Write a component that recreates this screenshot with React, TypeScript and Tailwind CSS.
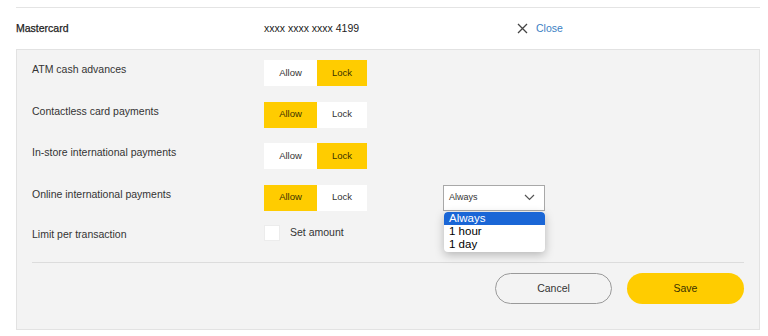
import { useState } from "react";

type Choice = "allow" | "lock";

const rows: { label: string; value: Choice }[] = [
    { label: "ATM cash advances", value: "lock" },
    { label: "Contactless card payments", value: "allow" },
    { label: "In-store international payments", value: "lock" },
    { label: "Online international payments", value: "allow" },
];

function Toggle({ value }: { value: Choice }) {
    return (
        <div className="flex h-[26px]">
            <div
                className={`w-[53px] flex items-center justify-center text-[9.5px] ${
                    value === "allow" ? "bg-[#ffcc00] text-[#3a3200]" : "bg-white text-[#333]"
                }`}
            >
                Allow
            </div>
            <div
                className={`w-[50px] flex items-center justify-center text-[9.5px] ${
                    value === "lock" ? "bg-[#ffcc00] text-[#3a3200]" : "bg-white text-[#333]"
                }`}
            >
                Lock
            </div>
        </div>
    );
}

export default function App() {
    const [period] = useState("Always");

    return (
        <div
            className="w-[768px] h-[336px] bg-white px-4 text-[#333] overflow-hidden"
            style={{ fontFamily: '"Liberation Sans", Arial, sans-serif' }}
        >
            <div className="pt-[7px] w-[744px]">
                <div className="h-px bg-[#e4e4e4]" />
            </div>

            <div className="flex items-center h-[41px] w-[744px] text-[10.5px]">
                <div className="w-[248px] text-[#222] [-webkit-text-stroke:0.25px_#222]">Mastercard</div>
                <div className="w-[253px] text-[#222]">xxxx xxxx xxxx 4199</div>
                <div className="flex items-center gap-[8px]">
                    <svg width="11" height="11" viewBox="0 0 11 11" className="text-[#444]">
                        <path d="M1 1L10 10M10 1L1 10" stroke="currentColor" strokeWidth="1.3" />
                    </svg>
                    <span className="text-[#3b7fc4] text-[10.5px]">Close</span>
                </div>
            </div>

            <div className="w-[744px] h-[281px] border border-[#e2e2e2] bg-[#f3f3f3] px-[15px] pt-[10px]">
                {rows.map((row, i) => (
                    <div key={row.label} className="flex items-start h-[41.5px]">
                        <div className="w-[232px] pt-[2px] text-[10.5px]">{row.label}</div>
                        <Toggle value={row.value} />
                        {i === 3 && (
                            <div className="relative ml-[76px]">
                                <div className="w-[102px] h-[26px] bg-white border border-[#a8a8a8] flex items-center justify-between pl-[5px] pr-[9px]">
                                    <span className="text-[9px] text-[#333]">{period}</span>
                                    <svg width="11" height="7" viewBox="0 0 11 7">
                                        <path d="M1 1L5.5 5.5L10 1" fill="none" stroke="#555" strokeWidth="1.2" />
                                    </svg>
                                </div>
                                <div className="absolute left-[1px] top-[27px] w-[101px] bg-white rounded-[4px] shadow-[0_3px_10px_rgba(0,0,0,0.25)] overflow-hidden text-[11.5px] leading-[13px] text-black z-10">
                                    <div className="bg-[#1a66d6] text-white pl-[5px] rounded-t-[3px]">Always</div>
                                    <div className="pl-[5px]">1 hour</div>
                                    <div className="pl-[5px] pb-[1px]">1 day</div>
                                </div>
                            </div>
                        )}
                    </div>
                ))}

                <div className="flex items-start h-[36px] -mt-[1px]">
                    <div className="w-[232px] pt-[2px] text-[10.5px]">Limit per transaction</div>
                    <div className="flex items-center gap-[10px]">
                        <div className="w-[16px] h-[16px] bg-white border border-[#ececec]" />
                        <span className="text-[10.5px]">Set amount</span>
                    </div>
                </div>

                <div className="h-px bg-[#dcdcdc] mt-[1px]" />

                <div className="flex justify-end gap-[15px] pt-[10px]">
                    <button className="w-[117px] h-[31px] rounded-full border border-[#9a9a9a] bg-transparent text-[10.5px] text-[#333]">
                        Cancel
                    </button>
                    <button className="w-[117px] h-[31px] rounded-full bg-[#ffcc00] text-[10.5px] text-[#3a3200]">
                        Save
                    </button>
                </div>
            </div>
        </div>
    );
}
